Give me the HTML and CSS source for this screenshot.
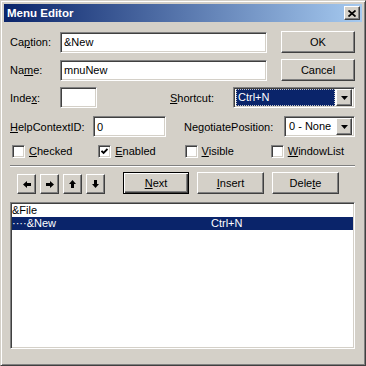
FILE: index.html
```html
<!DOCTYPE html>
<html lang="en">

<head>
    <meta charset="UTF-8">
    <title>Menu Editor</title>
    <link rel="stylesheet" href="styles.css">
</head>

<body>
    <div class="window">
        <div class="titlebar">
            <span class="title">Menu Editor</span>
            <div class="btn close">
                <svg width="8" height="7" viewBox="0 0 8 7">
                    <path d="M0.5 0.5 L7.5 6.5 M7.5 0.5 L0.5 6.5" stroke="#000" stroke-width="1.7" fill="none"/>
                </svg>
            </div>
        </div>

        <div class="content">
            <!-- Caption / OK -->
            <div class="row row-btn first">
                <span class="lbl lbl-main">Ca<u>p</u>tion:</span>
                <div class="field field-wide">&amp;New</div>
                <div class="btn btn-side">OK</div>
            </div>

            <!-- Name / Cancel -->
            <div class="row row-btn">
                <span class="lbl lbl-main">Na<u>m</u>e:</span>
                <div class="field field-wide">mnuNew</div>
                <div class="btn btn-side">Cancel</div>
            </div>

            <!-- Index / Shortcut -->
            <div class="row row-field">
                <span class="lbl lbl-main">Inde<u>x</u>:</span>
                <div class="field field-index"></div>
                <span class="lbl lbl-shortcut"><u>S</u>hortcut:</span>
                <div class="field combo combo-shortcut">
                    <span class="combo-val selected">Ctrl+N</span>
                    <div class="btn drop">
                        <svg width="7" height="4" viewBox="0 0 7 4"><path d="M0 0 H7 L3.5 4 Z" fill="#000"/></svg>
                    </div>
                </div>
            </div>

            <!-- HelpContextID / NegotiatePosition -->
            <div class="row row-field gap-help">
                <span class="lbl lbl-help"><u>H</u>elpContextID:</span>
                <div class="field field-help">0</div>
                <span class="lbl lbl-neg">Ne<u>g</u>otiatePosition:</span>
                <div class="field combo combo-neg">
                    <span class="combo-val">0 - None</span>
                    <div class="btn drop">
                        <svg width="7" height="4" viewBox="0 0 7 4"><path d="M0 0 H7 L3.5 4 Z" fill="#000"/></svg>
                    </div>
                </div>
            </div>

            <!-- Checkboxes -->
            <div class="row checks">
                <div class="check-item"><span class="checkbox"></span><u>C</u>hecked</div>
                <div class="check-item">
                    <span class="checkbox">
                        <svg width="7" height="7" viewBox="0 0 7 7"><path d="M0.5 2.8 L2.6 4.9 L6.5 1" stroke="#000" stroke-width="1.9" fill="none"/></svg>
                    </span><u>E</u>nabled
                </div>
                <div class="check-item"><span class="checkbox"></span><u>V</u>isible</div>
                <div class="check-item"><span class="checkbox"></span><u>W</u>indowList</div>
            </div>

            <div class="sep"></div>

            <!-- Arrows and editing buttons -->
            <div class="row tools">
                <div class="btn arrow first-arrow">
                    <svg width="8" height="7" viewBox="0 0 8 7"><path d="M0 3.5 L4 0 V2 H8 V5 H4 V7 Z" fill="#000"/></svg>
                </div>
                <div class="btn arrow">
                    <svg width="8" height="7" viewBox="0 0 8 7"><path d="M8 3.5 L4 0 V2 H0 V5 H4 V7 Z" fill="#000"/></svg>
                </div>
                <div class="btn arrow">
                    <svg width="7" height="8" viewBox="0 0 7 8"><path d="M3.5 0 L0 4 H2 V8 H5 V4 H7 Z" fill="#000"/></svg>
                </div>
                <div class="btn arrow">
                    <svg width="7" height="8" viewBox="0 0 7 8"><path d="M3.5 8 L0 4 H2 V0 H5 V4 H7 Z" fill="#000"/></svg>
                </div>
                <div class="btn btn-tool btn-next default"><u>N</u>ext</div>
                <div class="btn btn-tool"><u>I</u>nsert</div>
                <div class="btn btn-tool">Dele<u>t</u>e</div>
            </div>

            <!-- Menu list -->
            <div class="field list">
                <div class="item"><span class="item-name">&amp;File</span></div>
                <div class="item selected"><span class="item-name">····&amp;New</span><span>Ctrl+N</span></div>
            </div>
        </div>
    </div>
</body>

</html>
```

FILE: styles.css
```css
body {
    margin: 0;
    font-family: "Liberation Sans", Arial, sans-serif;
    font-size: 11px;
    color: #000;
    background: #d4d0c8;
}

u {
    text-decoration: underline;
    text-underline-offset: 1px;
}

.window {
    width: 366px;
    height: 366px;
    box-sizing: border-box;
    background: #d4d0c8;
    border: 1px solid;
    border-color: #d4d0c8 #404040 #404040 #d4d0c8;
    box-shadow: inset 1px 1px #fff, inset -1px -1px #808080;
    padding: 3px 3px 0 3px;
}

.titlebar {
    height: 18px;
    display: flex;
    align-items: center;
    background: linear-gradient(to right, #0a246a, #a6caf0);
    padding: 0 2px 0 2px;
}

.title {
    flex: 1;
    color: #fff;
    font-weight: bold;
    font-size: 11.5px;
    padding-left: 1px;
}

/* classic raised button */
.btn {
    box-sizing: border-box;
    display: flex;
    align-items: center;
    justify-content: center;
    background: #d4d0c8;
    border: 1px solid;
    border-color: #fff #404040 #404040 #fff;
    box-shadow: inset -1px -1px #808080, inset 1px 1px #d4d0c8;
}

.btn.default {
    border-color: #000;
    box-shadow: inset 1px 1px #fff, inset -1px -1px #404040, inset -2px -2px #808080;
}

.close {
    width: 16px;
    height: 14px;
}

/* classic sunken field */
.field {
    box-sizing: border-box;
    background: #fff;
    border: 1px solid;
    border-color: #808080 #fff #fff #808080;
    box-shadow: inset 1px 1px #404040, inset -1px -1px #d4d0c8;
    padding: 0 3px;
    display: flex;
    align-items: center;
    height: 21px;
}

.content {
    padding: 0 7px 0 6px;
}

.row {
    display: flex;
    align-items: center;
}

.row-btn {
    height: 22px;
    margin-top: 6px;
}

.row-btn.first {
    margin-top: 9px;
}

.row-field {
    height: 21px;
    margin-top: 6px;
}

.row-field.gap-help {
    margin-top: 8px;
}

.lbl-main {
    width: 50px;
}

.field-wide {
    width: 207px;
}

.btn-side {
    width: 74px;
    height: 22px;
    margin-left: 14px;
}

.field-index {
    width: 37px;
}

.lbl-shortcut {
    margin-left: 73px;
    width: 63px;
}

.lbl-help {
    width: 83px;
}

.field-help {
    width: 73px;
}

.lbl-neg {
    margin-left: 18px;
    width: 100px;
}

.combo {
    padding: 2px;
}

.combo-shortcut {
    width: 122px;
}

.combo-neg {
    width: 71px;
}

.combo-val {
    flex: 1;
    height: 15px;
    line-height: 15px;
    padding-left: 1px;
    margin-right: 1px;
    border: 1px solid transparent;
}

.combo-val.selected {
    background: #0a246a;
    color: #fff;
    border: 1px dotted #c8c8c8;
}

.drop {
    width: 16px;
    height: 17px;
}

.checks {
    height: 14px;
    margin-top: 7px;
}

.check-item {
    width: 87px;
    display: flex;
    align-items: center;
}

.checkbox {
    box-sizing: border-box;
    width: 13px;
    height: 13px;
    margin: 0 4px 0 2px;
    background: #fff;
    border: 1px solid;
    border-color: #808080 #fff #fff #808080;
    box-shadow: inset 1px 1px #404040, inset -1px -1px #d4d0c8;
    display: flex;
    align-items: center;
    justify-content: center;
}

.sep {
    margin-top: 7px;
    border-top: 1px solid #808080;
    border-bottom: 1px solid #fff;
}

.tools {
    height: 23px;
    margin-top: 5px;
    align-items: flex-start;
}

.arrow {
    width: 19px;
    height: 20px;
    margin: 2px 0 0 4px;
}

.arrow.first-arrow {
    margin-left: 7px;
}

.btn-tool {
    width: 67px;
    height: 22px;
    margin-left: 8px;
}

.btn-next {
    width: 66px;
    margin-left: 18px;
}

.list {
    margin-top: 7px;
    height: 147px;
    display: block;
    padding: 1px 1px 0 1px;
}

.item {
    display: flex;
    height: 13px;
    line-height: 13px;
}

.item.selected {
    background: #0a246a;
    color: #fff;
}

.item-name {
    width: 199px;
}
```
